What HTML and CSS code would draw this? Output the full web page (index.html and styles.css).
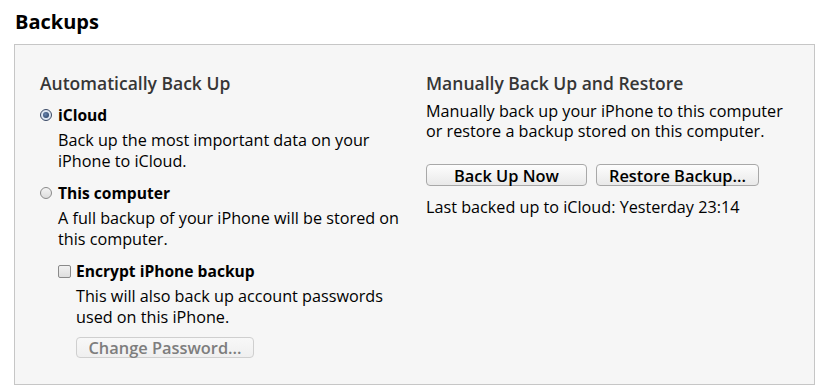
FILE: index.html
```html
<!DOCTYPE html>
<html>
<head>
<meta charset="utf-8">
<link rel="stylesheet" href="styles.css">
</head>
<body>
<h1 class="title">Backups</h1>
<div class="panel">
  <div class="col left">
    <h2 class="heading">Automatically Back Up</h2>
    <div class="option">
      <span class="radio checked"></span>
      <span class="label">iCloud</span>
    </div>
    <p class="desc">Back up the most important data on your<br>iPhone to iCloud.</p>
    <div class="option">
      <span class="radio"></span>
      <span class="label">This computer</span>
    </div>
    <p class="desc">A full backup of your iPhone will be stored on<br>this computer.</p>
    <div class="option sub">
      <span class="check"></span>
      <span class="label">Encrypt iPhone backup</span>
    </div>
    <p class="desc sub2">This will also back up account passwords<br>used on this iPhone.</p>
    <div class="sub2"><button class="btn disabled">Change Password...</button></div>
  </div>
  <div class="col right">
    <h2 class="heading">Manually Back Up and Restore</h2>
    <p class="text">Manually back up your iPhone to this computer<br>or restore a backup stored on this computer.</p>
    <div class="btns">
      <button class="btn wide">Back Up Now</button>
      <button class="btn wide2">Restore Backup...</button>
    </div>
    <p class="text last">Last backed up to iCloud: Yesterday 23:14</p>
  </div>
</div>
</body>
</html>
```
FILE: styles.css
```css
html, body {
  margin: 0;
  padding: 0;
  background: #ffffff;
  font-family: "Open Sans", "Noto Sans", sans-serif;
  color: #000;
}
.title {
  margin: 0;
  padding: 9px 0 0 15px;
  height: 44px;
  box-sizing: border-box;
  font-size: 20px;
  font-weight: 700;
  line-height: 26px;
}
.panel {
  margin: 0 11px 0 14px;
  height: 341px;
  box-sizing: border-box;
  border: 1px solid #c6c6c6;
  background: #f6f6f6;
  display: grid;
  grid-template-columns: 386px 1fr;
  align-items: start;
  padding: 26px 0 0 25px;
}
.heading {
  margin: 0 0 8px 0;
  font-size: 17.5px;
  font-weight: 600;
  color: #363636;
  line-height: 24px;
}
.option {
  display: flex;
  align-items: center;
  height: 24px;
  gap: 6px;
}
.label {
  font-size: 15.6px;
  font-weight: 700;
  line-height: 24px;
}
.radio {
  width: 10px;
  height: 10px;
  border-radius: 50%;
  border: 1px solid #8a8a8a;
  background: linear-gradient(#f4f4f4, #dcdcdc);
  position: relative;
  flex: none;
}
.radio.checked::after {
  content: "";
  position: absolute;
  left: 2px;
  top: 2px;
  width: 6px;
  height: 6px;
  border-radius: 50%;
  background: radial-gradient(circle at 40% 40%, #6a86b0, #1d3557);
}
.radio.checked {
  border-color: #3b4a66;
  background: #dde6f2;
}
.check {
  width: 11px;
  height: 11px;
  border: 1px solid #8a8a8a;
  border-radius: 2px;
  background: linear-gradient(#f2f2f2, #dedede);
  flex: none;
}
.desc, .text {
  margin: 0;
  font-size: 16.2px;
  line-height: 21px;
}
.desc {
  padding-left: 18px;
  margin: 3px 0 9px 0;
}
.option.sub {
  padding-left: 18px;
  gap: 5px;
}
.desc.sub2 {
  padding-left: 36px;
}
div.sub2 {
  padding-left: 36px;
}
.btn {
  font-family: inherit;
  font-size: 16.4px;
  font-weight: 600;
  height: 22px;
  padding: 0;
  line-height: 19px;
  border: 1px solid #a8a8a8;
  border-radius: 4px;
  background: linear-gradient(#fdfdfd, #e9e9e9);
  color: #000;
  box-sizing: border-box;
}
.btn.disabled {
  width: 178px;
  height: 21px;
  color: #7d7d7d;
  border-color: #cfcfcf;
  background: linear-gradient(#f8f8f8, #efefef);
}
.right .heading {
  margin-bottom: 6px;
}
.right .text {
  line-height: 20px;
}
.btns {
  display: flex;
  gap: 9px;
  margin-top: 23px;
}
.btn.wide { width: 161px; }
.btn.wide2 { width: 163px; }
.right .text.last {
  margin-top: 11px;
}
```
